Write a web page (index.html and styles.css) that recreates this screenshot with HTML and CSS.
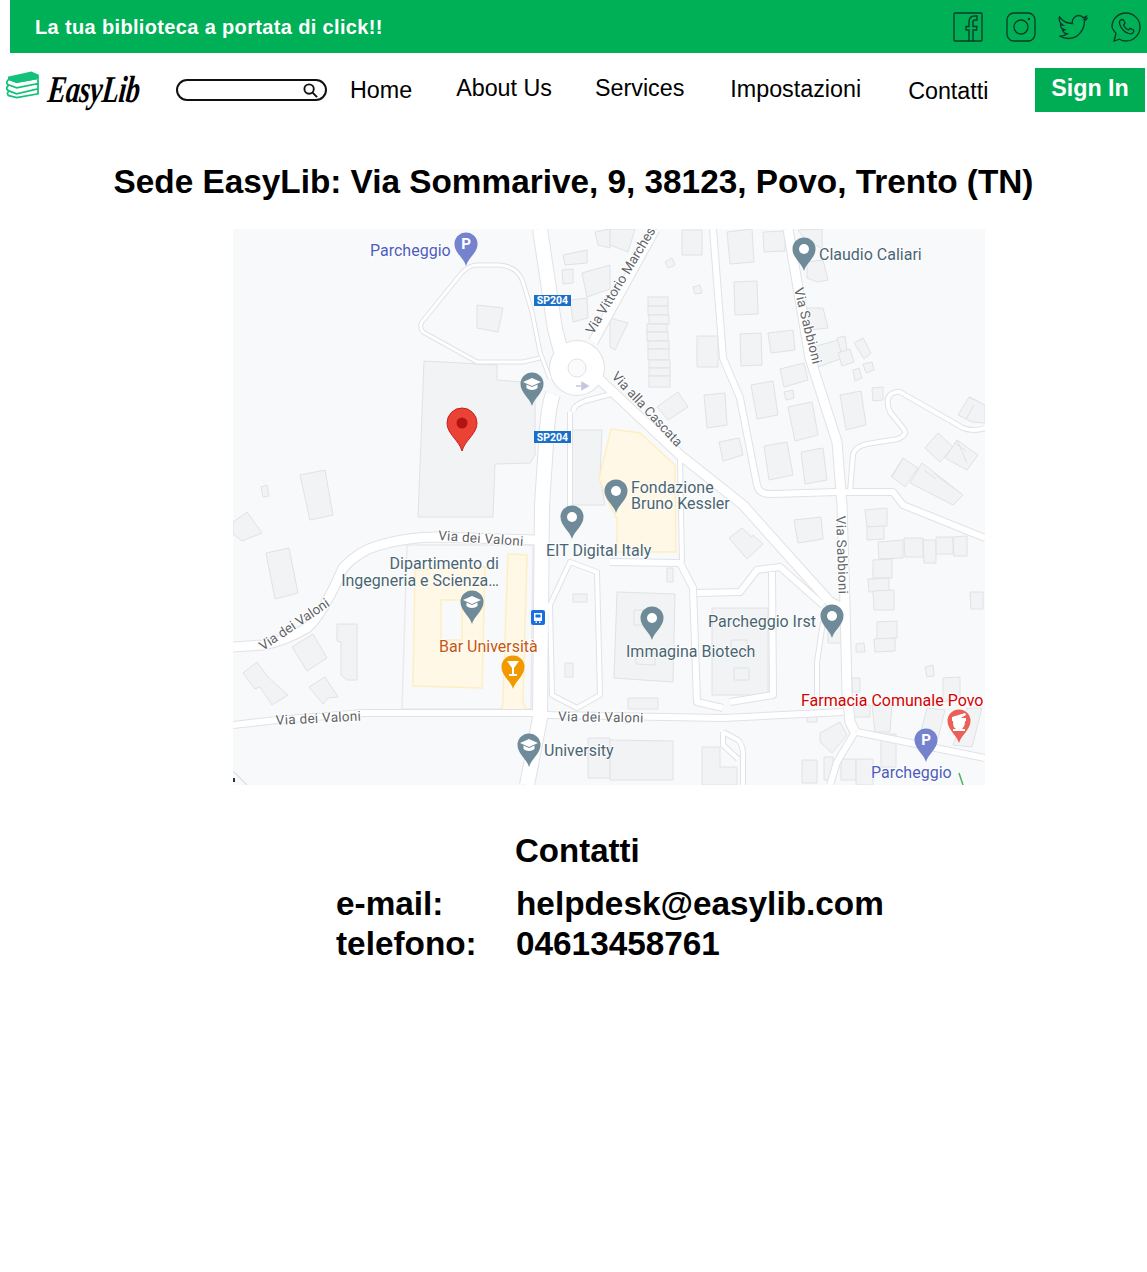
FILE: index.html
```html
<!DOCTYPE html>
<html lang="it">
<head>
<meta charset="utf-8">
<title>EasyLib - Contatti</title>
<link rel="stylesheet" href="styles.css">
</head>
<body>
<header class="topbar">
  <span class="slogan">La tua biblioteca a portata di click!!</span>
  <div class="social">
    <svg class="soc" viewBox="0 0 30 30"><rect x="1" y="1" width="28" height="28" rx="1"/><path d="M16 29V18H13V14.500H16V10C16 6 18 4 21.500 4H24V8H22C20.500 8 20 8.800 20 10V14.500H24L23.500 18H20V29"/></svg>
    <svg class="soc" viewBox="0 0 30 30"><rect x="1" y="1" width="28" height="28" rx="7"/><circle cx="15" cy="15" r="7"/><circle cx="23" cy="7" r="1.200" class="solid"/></svg>
    <svg class="soc soc-tw" viewBox="0 0 30 26"><path d="M1.500 3C4.500 7 9 9.500 14.500 9.500C13.500 5 17 1.500 20.500 1.500C22.500 1.500 24 2.400 25 3.500C26.300 3.300 27.500 2.800 28.500 2.200C28 3.500 27.200 4.500 26.200 5.300C27.200 5.200 28.200 4.900 29 4.500C28.300 5.600 27.400 6.500 26.400 7.300C26.500 16 20 24.500 10.500 24.500C7 24.500 4 23.500 1.500 22C4.500 22.300 7.300 21.500 9.500 19.800C7 19.700 5.200 18.200 4.500 16C5.300 16.100 6 16.100 6.800 15.800C4.300 15.300 2.500 13 2.500 10.500C3.200 10.900 4 11.100 4.800 11.100C2 9.500 0.500 6 1.500 3Z"/></svg>
    <svg class="soc" viewBox="0 0 30 30"><path d="M3 29L5 21.500C3.700 19.500 1 17.500 1 14.800C1 7 7.300 1 15 1C22.700 1 29 7.300 29 15C29 22.700 22.700 29 15 29C12.500 29 10.300 28.300 8.500 27.200Z"/><path d="M10.500 7.500C8.500 8.500 8 10.500 9 13C10.500 17 13.500 20 17.500 21.500C20 22.300 22 21.500 22.800 19.500L22.500 18L19 16.300L17.500 18C15.500 17.200 13.500 15.200 12.500 13L14 11.300L12.500 7.800Z"/></svg>
  </div>
</header>

<nav class="nav">
  <a class="logo">
    <svg class="books" viewBox="0 0 34 28"><path class="bk-top" d="M3 6L26 1L33 4V7L11 11L3 8Z"/><path class="bk" d="M3 8L11 11L33 7M3 8C0 10 0 13 3 14L11 17L33 12.500V8M3 14C0 16 0 19 3 20L11 23L33 18V13M3 20C1 22 1 24 3 25L11 27L33 23V18"/></svg>
    <span class="logotext">EasyLib</span>
  </a>
  <div class="search">
    <svg class="search-icon" viewBox="0 0 16 16"><circle cx="6.500" cy="6.500" r="5"/><path d="M10.200 10.200L15 15"/></svg>
  </div>
  <a class="link link-home">Home</a>
  <a class="link link-about">About Us</a>
  <a class="link link-services">Services</a>
  <a class="link link-settings">Impostazioni</a>
  <a class="link link-contact">Contatti</a>
  <a class="signin">Sign In</a>
</nav>

<main>
  <h1 class="title">Sede EasyLib: Via Sommarive, 9, 38123, Povo, Trento (TN)</h1>

  <svg class="map" viewBox="0 0 752 556" width="752" height="556">
    <defs>
      <path id="pin" d="M0 0C-2 -8 -11.500 -13 -11.500 -22A11.500 11.500 0 1 1 11.500 -22C11.500 -13 2 -8 0 0Z"/>
      <g id="cap"><path class="w" d="M0 -28L9 -24L0 -20L-9 -24Z"/><path class="w" d="M-5.500 -21.500V-18C-3 -15.500 3 -15.500 5.500 -18V-21.500L0 -19Z"/></g>
      <g id="r-thin"><path d="M307 129L290 133H244L217 118L190 103Q186 98 189 93L227 46Q235 36 244 36H267Q285 38 290 53L299 83L307 123L317 150"/></g>
      <g id="r-4">
        <path d="M447 229L449 333"/>
        <path d="M584 473V433L590 393"/>
        <path d="M337 333L317 376L319 466L344 479L367 466L364 343L337 333Z"/>
        <path d="M617 263L620 226Q622 216 640 214L665 210Q676 205 670 199L657 183Q651 168 660 164Q664 162 667 163L730 199Q740 203 752 199"/>
        <path d="M490 503L505 511Q510 516 510 525V556M490 503V516L505 530"/>
        <path d="M341 183Q338 178 352 172L378 165"/>
        <path d="M337 183V300"/>
      </g>
      <g id="r-6">
        <path d="M377 333L447 334L460 359L464 473L490 479"/>
        <path d="M464 364L507 363L524 341L547 338L590 376"/>
        <path d="M539 343L540 466L497 473"/>
        <path d="M480 0L490 129L507 169L524 256Q526 266 540 265L604 263L660 263L670 276L752 309"/>
        <path d="M0 496L44 491L130 484L297 484L317 486L490 489L610 483"/>
        <path d="M624 503L752 529"/>
        <path d="M622 503L604 533L597 556"/>
      </g>
      <g id="r-9">
        <path d="M0 418L30 416Q52 412 74 399Q90 385 110 339Q125 322 147 316Q175 308 204 308L304 311"/>
        <path d="M366 150L447 226L510 276L597 373L612 380"/>
        <path d="M360 113L422 0"/>
        <path d="M555 0L577 129L604 213L609 276L612 376L614 463L617 493L622 503"/>
      </g>
      <g id="r-14">
        <path d="M307 0L322 100L330 130"/>
        <path d="M320 165Q316 175 314 200L309 276L307 489L294 556"/>
      </g>
    </defs>

    <rect class="bg" width="752" height="556"/>

    <path class="lot" d="M174 316H300L298 480H169Z"/>
    <g class="buildings">
      <polygon points="191,132 264,136 264,151 302,154 302,226 297,234 262,235 260,288 185,288"/>
      <polygon points="244,76 270,79 265,103 244,99"/>
      <polygon points="67,246 92,241 100,286 77,291"/>
      <polygon points="28,258 34,256 36,267 30,268"/>
      <polygon points="0,293 14,283 29,304 9,312 0,305"/>
      <polygon points="330,26 354,21 354,34 332,36"/>
      <polygon points="329,41 340,40 340,54 330,55"/>
      <polygon points="349,44 377,36 377,60 354,68"/>
      <polygon points="337,71 354,69 355,89 340,93"/>
      <polygon points="362,3 377,0 377,19 365,16"/>
      <polygon points="337,201 369,201 367,249 372,276 337,276"/>
      <polygon points="377,0 402,0 395,23 377,16"/>
      <polygon points="449,1 469,1 469,26 449,26"/>
      <polygon points="494,3 519,0 521,33 497,35"/>
      <polygon points="530,3 552,2 552,22 531,23"/>
      <polygon points="565,1 589,0 589,20 570,8"/>
      <polygon points="574,33 590,31 595,51 584,53 574,49"/>
      <polygon points="432,33 439,29 442,36 435,39"/>
      <polygon points="460,58 467,56 469,64 462,65"/>
      <polygon points="501,53 524,52 525,85 502,86"/>
      <rect x="415" y="68" width="20" height="9"/><rect x="415" y="77" width="20" height="9"/><rect x="416" y="86" width="20" height="9"/><rect x="414" y="95" width="20" height="8"/><rect x="414" y="103" width="21" height="9"/><rect x="415" y="112" width="21" height="8"/><rect x="415" y="120" width="21" height="11"/><rect x="416" y="131" width="21" height="8"/><rect x="416" y="139" width="21" height="8"/><rect x="416" y="147" width="21" height="11"/>
      <polygon points="377,89 395,94 382,121 377,118"/>
      <polygon points="464,107 485,107 485,138 464,138"/>
      <polygon points="507,105 528,104 529,136 508,137"/>
      <polygon points="535,104 560,101 562,121 538,124"/>
      <polygon points="574,79 590,79 595,99 577,101"/>
      <polygon points="580,118 605,111 610,129 585,138"/>
      <polygon points="604,109 612,107 614,121 608,123"/>
      <polygon points="605,124 617,120 621,133 609,137"/>
      <polygon points="621,114 630,109 638,124 631,130"/>
      <polygon points="620,141 626,139 629,149 622,152"/>
      <polygon points="630,135 639,133 641,141 633,144"/>
      <polygon points="547,140 571,134 575,151 551,158"/>
      <polygon points="518,156 540,152 545,186 524,190"/>
      <polygon points="551,163 560,161 561,169 553,171"/>
      <polygon points="555,178 579,173 585,206 562,212"/>
      <polygon points="607,166 628,162 633,196 613,201"/>
      <polygon points="639,159 650,158 650,171 640,172"/>
      <polygon points="424,178 445,163 455,178 435,191"/>
      <polygon points="471,166 492,164 494,196 474,199"/>
      <polygon points="486,213 506,209 510,226 490,232"/>
      <polygon points="531,217 554,213 560,246 536,251"/>
      <polygon points="568,223 590,219 594,251 572,255"/>
      <polygon points="725,186 736,168 752,176 752,194 739,193"/>
      <polygon points="692,219 705,204 720,218 707,233"/>
      <polygon points="712,229 724,211 745,226 734,241"/>
      <polygon points="659,248 670,229 685,239 672,258"/>
      <polygon points="677,254 689,234 730,266 720,276"/>
      <polygon points="33,324 56,319 65,364 42,370"/>
      <polygon points="104,395 124,395 124,451 114,451 108,446 108,413 104,412"/>
      <polygon points="59,418 80,405 94,429 74,442"/>
      <polygon points="10,444 24,433 35,448 55,466 39,476 27,458 22,460"/>
      <polygon points="76,458 92,448 105,468 95,469 90,475"/>
      <polygon points="340,365 354,365 354,373 340,373"/>
      <polygon points="332,434 340,434 340,448 332,448"/>
      <polygon points="355,509 377,509 377,549 355,549"/>
      <polygon points="384,363 442,365 440,453 381,449"/>
      <polygon points="401,381 417,381 417,396 401,396"/>
      <polygon points="403,424 422,424 422,436 403,435"/>
      <polygon points="479,379 535,379 535,466 479,466"/>
      <polygon points="498,411 514,411 514,423 498,423"/>
      <polygon points="501,439 516,439 516,451 501,451"/>
      <polygon points="434,339 440,339 440,353 434,353"/>
      <polygon points="395,469 425,469 425,480 395,480"/>
      <polygon points="377,511 440,512 440,551 377,551"/>
      <polygon points="561,291 588,288 590,310 565,314"/>
      <polygon points="496,309 509,299 519,308 520,306 530,315 514,330"/>
      <polygon points="632,281 654,279 654,297 634,298"/>
      <polygon points="634,298 651,297 651,310 634,311"/>
      <polygon points="645,313 670,311 670,329 646,330"/>
      <polygon points="671,309 690,309 690,328 672,328"/>
      <polygon points="690,311 703,311 703,334 691,334"/>
      <polygon points="703,308 720,308 720,325 703,325"/>
      <polygon points="720,308 734,307 734,327 721,327"/>
      <polygon points="640,331 659,330 659,349 640,349"/>
      <polygon points="635,350 656,349 656,362 636,363"/>
      <polygon points="640,362 661,361 661,381 641,381"/>
      <polygon points="644,393 664,392 664,409 644,410"/>
      <polygon points="641,410 662,409 662,422 642,423"/>
      <polygon points="623,415 631,414 632,423 623,423"/>
      <polygon points="737,363 750,363 750,380 738,380"/>
      <polygon points="692,438 700,436 701,447 694,448"/>
      <polygon points="619,449 627,449 627,463 619,463"/>
      <polygon points="710,449 727,448 727,469 710,473"/>
      <polygon points="694,479 712,481 705,509 687,506"/>
      <polygon points="734,479 749,479 739,518 720,516"/>
      <polygon points="620,476 637,476 637,488 620,488"/>
      <polygon points="639,476 659,476 657,503 642,503"/>
      <polygon points="574,483 584,483 584,493 574,493"/>
      <polygon points="587,504 607,493 614,506 599,524 587,513"/>
      <polygon points="569,531 584,531 584,554 569,554"/>
      <polygon points="591,528 600,528 601,551 591,551"/>
      <polygon points="608,530 623,530 623,551 608,551"/>
      <polygon points="623,530 640,530 640,556 623,556"/>
      <polygon points="648,505 663,505 663,538 648,538"/>
      <polygon points="469,518 487,518 487,538 504,538 504,556 469,556"/>
      <polygon points="595,393 611,393 611,414 595,414"/>
      <path d="M691 241L703 250M701 244L712 253M712 253L722 260M670 229L658 248M736 168L745 172M733 222L722 214M741 176L733 190M724 211L734 234"/>
    </g>
    <g class="yellow">
      <path fill-rule="evenodd" d="M182 341L252 338L249 459L180 457ZM208 371V411H229V371Z"/>
      <polygon points="275,325 294,326 290,473 293,480 278,483 269,481 270,471"/>
      <polygon points="378,200 407,204 442,236 443,323 384,323 384,290 374,270 366,250"/>
    </g>

    <use href="#r-thin" class="casing w3"/>
    <use href="#r-4" class="casing w4"/>
    <use href="#r-6" class="casing w6"/>
    <use href="#r-9" class="casing w9"/>
    <use href="#r-14" class="casing w14"/>
    <circle class="rb-case" cx="344" cy="139" r="28"/>
    <use href="#r-thin" class="road w3"/>
    <use href="#r-4" class="road w4"/>
    <use href="#r-6" class="road w6"/>
    <use href="#r-9" class="road w9"/>
    <use href="#r-14" class="road w14"/>
    <circle class="rb" cx="344" cy="139" r="27"/>
    <circle class="rb-in" cx="344" cy="139" r="9"/>
    <path class="oneway" d="M343 157H352M349 153.500L355 157L349 160.500Z"/>
    <path class="greenline" d="M726 544L730 556"/>
    <path class="road-edge" d="M0 542L14 556"/>
    <path class="black-mark" d="M0 549H2V553H0Z"/>

    <g class="sp">
      <rect x="301" y="66" width="37" height="11"/><text x="319.500" y="75">SP204</text>
      <rect x="301" y="202" width="37" height="12"/><text x="319.500" y="211.500">SP204</text>
    </g>

    <g class="roadlabel">
      <text x="205" y="311" transform="rotate(4 205 311)">Via dei Valoni</text>
      <text class="tight" x="30" y="422" transform="rotate(-34 30 422)">Via dei Valoni</text>
      <text x="43" y="496" transform="rotate(-3 43 496)">Via dei Valoni</text>
      <text x="325" y="492" transform="rotate(1 325 492)">Via dei Valoni</text>
      <text class="tight" x="360" y="106" transform="rotate(-59 360 106)">Via Vittorio Marchesi</text>
      <text class="tight" x="378" y="148" transform="rotate(47 378 148)">Via alla Cascata</text>
      <text x="561" y="60" transform="rotate(76 561 60)">Via Sabbioni</text>
      <text x="603" y="287" transform="rotate(88 603 287)">Via Sabbioni</text>
    </g>

    <use href="#pin" class="p-purple" x="233" y="37"/><text class="pin-p" x="233" y="20">P</text>
    <use href="#pin" class="p-grey" x="299" y="177"/><use href="#cap" x="299" y="177"/>
    <use href="#pin" class="p-grey" x="571" y="42"/><circle class="w" cx="571" cy="20" r="5"/>
    <use href="#pin" class="p-grey" x="383" y="284"/><circle class="w" cx="383" cy="262" r="5"/>
    <use href="#pin" class="p-grey" x="339" y="310"/><circle class="w" cx="339" cy="288" r="5"/>
    <use href="#pin" class="p-grey" x="239" y="395"/><use href="#cap" x="239" y="395"/>
    <use href="#pin" class="p-orange" x="280" y="460"/>
    <path class="w" d="M274 432H286L281 439V445H284V447H276V445H279V439Z"/>
    <use href="#pin" class="p-grey" x="296" y="538"/><use href="#cap" x="296" y="538"/>
    <use href="#pin" class="p-grey" x="419" y="411"/><circle class="w" cx="419" cy="389" r="5"/>
    <use href="#pin" class="p-grey" x="599" y="409"/><circle class="w" cx="599" cy="387" r="5"/>
    <use href="#pin" class="p-redsoft" x="726" y="514"/>
    <path class="w" d="M719 488L732 484L733 486L728 489H733V492H732C732 497 730 499 729 500H732V502H720V500H723C721 499 720 497 720 492H719Z"/>
    <use href="#pin" class="p-purple" x="693" y="533"/><text class="pin-p" x="693" y="516">P</text>

    <rect class="bus" x="298" y="381" width="14" height="15" rx="2"/>
    <path class="w" d="M301 384H309V392H301ZM302.500 392.500H304V394H302.500ZM306 392.500H307.500V394H306Z"/>
    <rect class="bus" x="302.500" y="385.500" width="5" height="3"/>

    <g class="marker">
      <path class="m-body" d="M229 222C226 211 214 205 214 194A15 15 0 1 1 244 194C244 205 232 211 229 222Z"/>
      <circle class="m-dot" cx="229" cy="194" r="5.500"/>
    </g>

    <g class="poi">
      <text class="blue" x="137" y="27">Parcheggio</text>
      <text x="586" y="31">Claudio Caliari</text>
      <text x="398" y="264">Fondazione</text>
      <text x="398" y="280">Bruno Kessler</text>
      <text x="313" y="327">EIT Digital Italy</text>
      <text class="end" x="266" y="340">Dipartimento di</text>
      <text class="end" x="266" y="357">Ingegneria e Scienza…</text>
      <text class="orange" x="206" y="423">Bar Università</text>
      <text x="393" y="428">Immagina Biotech</text>
      <text x="475" y="398">Parcheggio Irst</text>
      <text class="red" x="568" y="477">Farmacia Comunale Povo</text>
      <text class="blue" x="638" y="549">Parcheggio</text>
      <text x="311" y="527">University</text>
    </g>
  </svg>

  <section class="contacts">
    <h2 class="contacts-title">Contatti</h2>
    <dl class="contacts-list">
      <dt>e-mail:</dt><dd>helpdesk@easylib.com</dd>
      <dt>telefono:</dt><dd>04613458761</dd>
    </dl>
  </section>
</main>
</body>
</html>
```
FILE: styles.css
```css
* { box-sizing: border-box; }
html, body { margin: 0; padding: 0; background: #fff; }
body { font-family: "Liberation Sans", Arial, sans-serif; color: #000; min-height: 1272px; }

.topbar {
  margin-left: 10px;
  height: 53px;
  background: #00b057;
  display: flex;
  align-items: center;
  justify-content: space-between;
  padding: 2px 6px 0 25px;
}
.slogan { color: #fff; font-weight: 700; font-size: 20px; letter-spacing: 0.35px; }
.social { display: flex; align-items: center; gap: 22.700px; margin-top: -2px; }
.soc { width: 30px; height: 30px; fill: none; stroke: #0b3a26; stroke-width: 1.300; }
.soc-tw { height: 26px; }
.solid { fill: #0b3a26; stroke: none; }

.nav { display: flex; align-items: flex-start; height: 60px; }
.nav > * { flex-shrink: 0; }
.logo { display: flex; align-items: flex-start; margin: 18px 0 0 6px; width: 170px; }
.books { width: 33px; height: 28px; fill: none; stroke: #12c27a; stroke-width: 1.800; flex-shrink: 0; }
.bk-top { fill: #12c27a; stroke: #12c27a; }
.logotext {
  display: inline-block;
  margin: -4px 0 0 9px;
  font-family: "Liberation Serif", serif;
  font-style: italic;
  font-weight: 700;
  font-size: 38px;
  line-height: 44px;
  letter-spacing: -0.5px;
  transform: skewX(-6deg) scaleX(0.735);
  transform-origin: left center;
}
.search {
  width: 151px;
  height: 22px;
  margin-top: 26px;
  border: 2px solid #111;
  border-radius: 11px;
  display: flex;
  align-items: center;
  justify-content: flex-end;
  padding-right: 7px;
}
.search-icon { width: 15px; height: 15px; fill: none; stroke: #111; stroke-width: 2; }
.link { font-size: 23.300px; line-height: 28px; white-space: nowrap; }
.link-home { margin: 23px 0 0 23px; }
.link-about { margin: 21px 0 0 44px; }
.link-services { margin: 21px 0 0 43px; }
.link-settings { margin: 22px 0 0 46px; }
.link-contact { margin: 24px 0 0 47px; }
.signin {
  margin: 15px 2px 0 auto;
  width: 110px;
  height: 44px;
  background: #00ad54;
  color: #fff;
  font-weight: 700;
  font-size: 23.300px;
  line-height: 40px;
  text-align: center;
}

.title {
  margin: 48px 0 0;
  font-size: 33.330px;
  line-height: 42px;
  font-weight: 700;
  text-align: center;
}
.map { display: block; margin: 26px 0 0 233px; }

.bg { fill: #f8f9fa; }
.lot { fill: none; stroke: #e8eaed; stroke-width: 1.500; }
.buildings polygon, .buildings rect { fill: #f1f3f4; stroke: #e0e2e6; stroke-width: 1; }
.buildings path { fill: none; stroke: #e0e2e6; stroke-width: 1; }
.yellow path, .yellow polygon { fill: #fff8e6; stroke: #fdeec4; stroke-width: 1.500; }
.casing { fill: none; stroke: #e0e2e6; stroke-linejoin: round; }
.road { fill: none; stroke: #fff; stroke-linejoin: round; }
.casing.w3 { stroke-width: 5px; } .road.w3 { stroke-width: 3px; }
.casing.w4 { stroke-width: 6px; } .road.w4 { stroke-width: 4px; }
.casing.w6 { stroke-width: 8px; } .road.w6 { stroke-width: 6px; }
.casing.w9 { stroke-width: 11px; } .road.w9 { stroke-width: 9px; }
.casing.w14 { stroke-width: 16px; } .road.w14 { stroke-width: 14px; }
.rb-case { fill: #e0e2e6; }
.rb { fill: #fff; }
.rb-in { fill: #fafbfc; stroke: #e0e2e6; stroke-width: 1; }
.oneway { fill: #c3c7e0; stroke: #c3c7e0; stroke-width: 1.500; }
.greenline { stroke: #46b45a; stroke-width: 1.500; fill: none; }
.road-edge { stroke: #dfe1e5; stroke-width: 1.500; fill: none; }
.black-mark { fill: #333; }

.sp rect { fill: #1a70c8; }
.sp text { fill: #fff; font-family: Roboto, sans-serif; font-weight: 700; font-size: 10.500px; text-anchor: middle; }
.roadlabel text { font-family: Roboto, sans-serif; font-size: 13.500px; fill: #5f6368; stroke: #fff; stroke-width: 2px; paint-order: stroke; letter-spacing: 0.3px; }
.roadlabel .tight { letter-spacing: 0; }
.poi text { font-family: Roboto, sans-serif; font-size: 16px; fill: #4a6572; stroke: #fff; stroke-width: 1.500px; paint-order: stroke; }
.poi .end { text-anchor: end; }
.poi .blue { fill: #4d5cbc; }
.poi .orange { fill: #c7570b; }
.poi .red { fill: #d50000; }

.p-grey { fill: #6f8a98; }
.p-purple { fill: #7583cf; }
.p-orange { fill: #f29900; }
.p-redsoft { fill: #ec5f58; }
.w { fill: #fff; }
.pin-p { fill: #fff; font-family: Roboto, sans-serif; font-weight: 700; font-size: 15px; text-anchor: middle; }
.bus { fill: #1a6fe0; }
.m-body { fill: #ea4335; stroke: #c5221f; stroke-width: 1; }
.m-dot { fill: #b31412; }

.contacts { margin: 0 0 0 336px; padding-top: 45px; }
.contacts-title { margin: 0 0 0 179px; font-size: 33px; line-height: 42px; font-weight: 700; }
.contacts-list {
  margin: 12px 0 0;
  display: grid;
  grid-template-columns: 180px auto;
  font-size: 33.330px;
  line-height: 40px;
  font-weight: 700;
}
.contacts-list dt, .contacts-list dd { margin: 0; }
```
